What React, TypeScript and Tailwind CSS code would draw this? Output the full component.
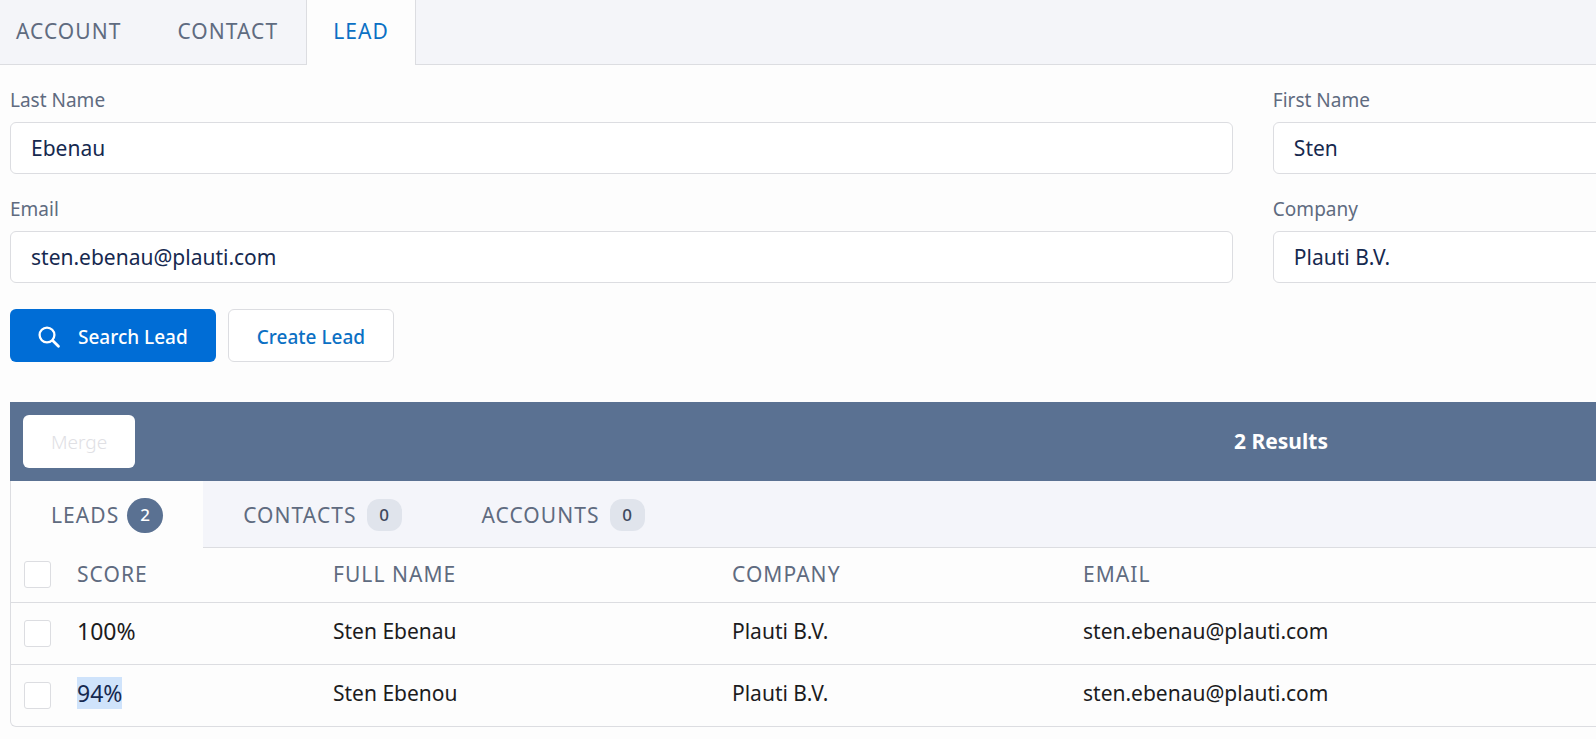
import React, { useState } from "react";
import { clsx } from "clsx";

const searchTabs = ["Account", "Contact", "Lead"];

const resultTabs = [
  { label: "Leads", count: 2 },
  { label: "Contacts", count: 0 },
  { label: "Accounts", count: 0 },
];

const fields = [
  { id: "lastName", label: "Last Name", value: "Ebenau" },
  { id: "firstName", label: "First Name", value: "Sten" },
  { id: "email", label: "Email", value: "sten.ebenau@plauti.com" },
  { id: "company", label: "Company", value: "Plauti B.V." },
];

const leads = [
  {
    id: "1",
    score: "100%",
    fullName: "Sten Ebenau",
    company: "Plauti B.V.",
    email: "sten.ebenau@plauti.com",
    highlighted: false,
  },
  {
    id: "2",
    score: "94%",
    fullName: "Sten Ebenou",
    company: "Plauti B.V.",
    email: "sten.ebenau@plauti.com",
    highlighted: true,
  },
];

const SearchIcon = () => (
  <svg
    viewBox="0 0 22 22"
    className="size-[22px]"
    fill="none"
    stroke="currentColor"
    strokeWidth="2.3"
    aria-hidden="true"
  >
    <circle cx="9" cy="9" r="7.4" />
    <path d="M14.6 14.6L20.4 20.2" strokeWidth="2.8" strokeLinecap="round" />
  </svg>
);

const Checkbox = ({
  label,
  checked,
  onChange,
}: {
  label: string;
  checked: boolean;
  onChange: () => void;
}) => (
  <input
    type="checkbox"
    aria-label={label}
    checked={checked}
    onChange={onChange}
    className="block size-[27px] appearance-none rounded-[3px] border border-[#dcdde1] bg-white checked:bg-[#006dd6]"
  />
);

const App: React.FC = () => {
  const [activeTab, setActiveTab] = useState("Lead");
  const [activeResult, setActiveResult] = useState("Leads");
  const [selected, setSelected] = useState<string[]>([]);

  const toggle = (id: string) =>
    setSelected((prev) =>
      prev.includes(id) ? prev.filter((item) => item !== id) : [...prev, id]
    );

  const toggleAll = () =>
    setSelected(selected.length === leads.length ? [] : leads.map((l) => l.id));

  return (
    <div className="min-h-screen overflow-hidden bg-[#fdfdfd] font-['Noto_Sans',sans-serif] text-[21px] leading-7 text-[#1c1c1e]">
      <div className="w-[157%]">
        <nav className="flex h-[65px] border-b border-[#dcdde1] bg-[#f4f5f9]">
          <div className="-mb-px -ml-3 flex">
            {searchTabs.map((tab) => (
              <button
                key={tab}
                onClick={() => setActiveTab(tab)}
                className={clsx(
                  "pb-1 tracking-wider uppercase",
                  activeTab === tab
                    ? "border-x border-[#dcdde1] bg-[#fdfdfd] px-[26px] text-[#0b70c4]"
                    : "px-7 text-[#5f6b80]"
                )}
              >
                {tab}
              </button>
            ))}
          </div>
        </nav>

        <main className="px-[10px] pt-[21px]">
          <form onSubmit={(e) => e.preventDefault()}>
            <div className="grid grid-cols-2 gap-x-10 gap-y-[21px]">
              {fields.map((field) => (
                <div key={field.id}>
                  <label
                    htmlFor={field.id}
                    className="mb-2 block text-[19px] text-[#5f6b80]"
                  >
                    {field.label}
                  </label>
                  <input
                    id={field.id}
                    type="text"
                    defaultValue={field.value}
                    className="block h-[52px] w-full rounded-md border border-[#dcdde1] bg-white px-5 text-[#16294f] focus:outline-none"
                  />
                </div>
              ))}
            </div>

            <div className="mt-[26px] flex gap-3">
              <button
                type="submit"
                className="flex h-[53px] items-center gap-[18px] rounded-md bg-[#006dd6] px-7 pt-0.5 text-[19px] font-medium text-white"
              >
                <SearchIcon />
                Search Lead
              </button>
              <button
                type="button"
                className="h-[53px] rounded-md border border-[#dcdde1] bg-white px-7 pt-0.5 text-[19px] font-medium text-[#0b70c4]"
              >
                Create Lead
              </button>
            </div>
          </form>

          <section className="mt-10">
            <div className="flex h-[79px] items-center bg-[#5a7192] px-[13px]">
              <button
                disabled={selected.length < 2}
                className="h-[53px] rounded-md bg-white px-7 text-[19px] text-[#006dd6] disabled:font-light disabled:text-[#e0e0e4]"
              >
                Merge
              </button>
              <h2 className="flex-1 pr-14 pb-0.5 text-center font-bold text-white">
                2 Results
              </h2>
            </div>

            <div className="rounded-b-md border border-t-0 border-[#dcdde1]">
              <div className="flex h-[67px] bg-[#f4f5fa]">
                {resultTabs.map((tab) => (
                  <button
                    key={tab.label}
                    onClick={() => setActiveResult(tab.label)}
                    className={clsx(
                      "flex items-center border-b px-10 pt-0.5 tracking-wider text-[#5f6b80] uppercase",
                      activeResult === tab.label
                        ? "gap-2 border-[#fdfdfd] bg-[#fdfdfd]"
                        : "gap-[10px] border-[#dcdde1]"
                    )}
                  >
                    {tab.label}
                    <span
                      className={clsx(
                        "flex items-center justify-center text-[17px] font-medium tracking-normal",
                        activeResult === tab.label
                          ? "h-[35px] w-9 rounded-full bg-[#5a7192] text-white"
                          : "h-8 w-[35px] rounded-xl bg-[#e0e4ec] text-[#3f4a5e]"
                      )}
                    >
                      {tab.count}
                    </span>
                  </button>
                ))}
                <div className="flex-1 border-b border-[#dcdde1]" />
              </div>

              <table className="w-full table-fixed text-left">
                <colgroup>
                  <col className="w-[66px]" />
                  <col className="w-64" />
                  <col className="w-[399px]" />
                  <col className="w-[351px]" />
                  <col />
                </colgroup>
                <thead>
                  <tr className="h-[54px] border-b border-[#dcdde1] tracking-wider text-[#5f6b80] uppercase">
                    <th className="pl-[13px]">
                      <Checkbox
                        label="Select all"
                        checked={selected.length === leads.length}
                        onChange={toggleAll}
                      />
                    </th>
                    <th className="pb-0.5 font-normal">Score</th>
                    <th className="pb-0.5 font-normal">Full Name</th>
                    <th className="pb-0.5 font-normal">Company</th>
                    <th className="pb-0.5 font-normal">Email</th>
                  </tr>
                </thead>
                <tbody>
                  {leads.map((lead) => (
                    <tr
                      key={lead.id}
                      className="h-[62px] border-b border-[#dcdde1] last:border-b-0"
                    >
                      <td className="pl-[13px]">
                        <Checkbox
                          label={`Select ${lead.fullName}`}
                          checked={selected.includes(lead.id)}
                          onChange={() => toggle(lead.id)}
                        />
                      </td>
                      <td className="pb-1 text-[23px]">
                        <span
                          className={clsx(
                            lead.highlighted && "bg-[#cfe3fb] text-[#16294f]"
                          )}
                        >
                          {lead.score}
                        </span>
                      </td>
                      <td className="pb-1">{lead.fullName}</td>
                      <td className="pb-1">{lead.company}</td>
                      <td className="pb-1">{lead.email}</td>
                    </tr>
                  ))}
                </tbody>
              </table>
            </div>
          </section>
        </main>
      </div>
    </div>
  );
};

export default App;
